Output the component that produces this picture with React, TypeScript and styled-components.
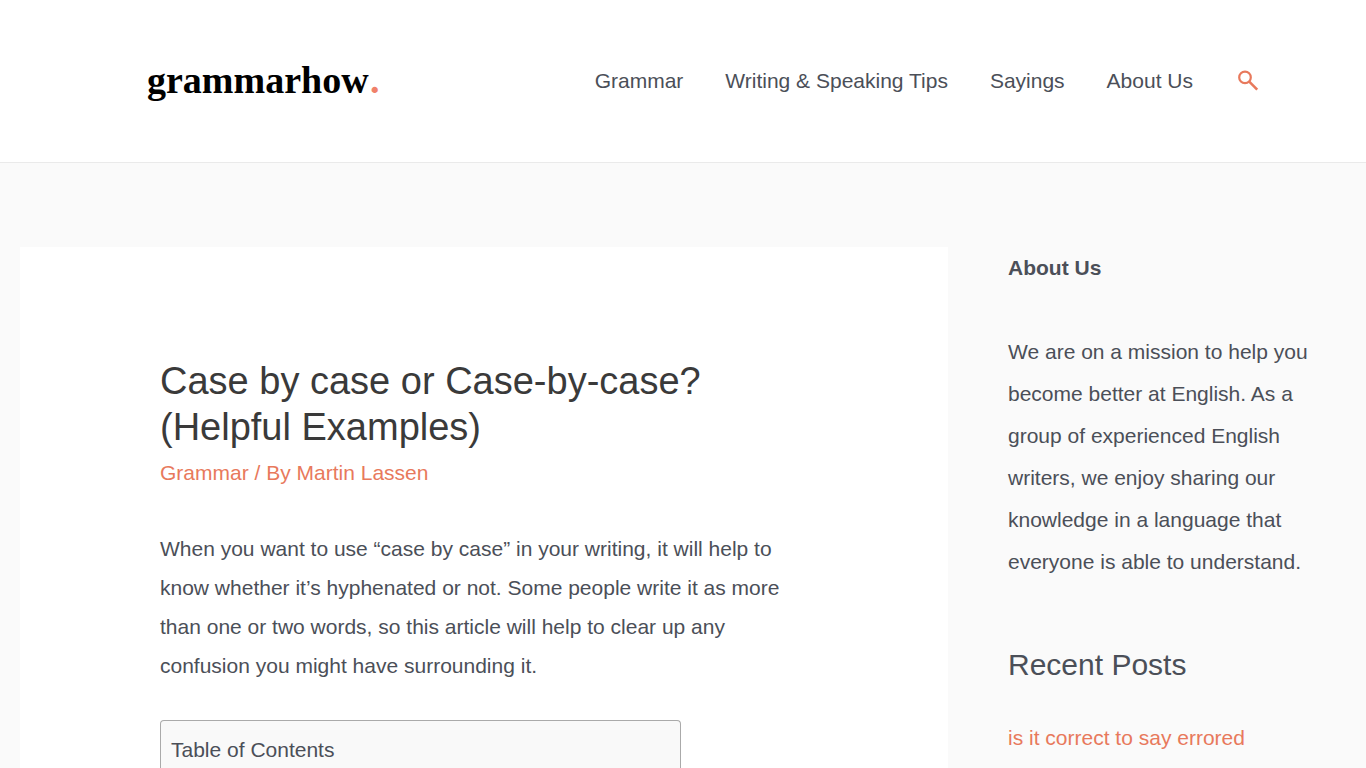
import React from 'react';
import styled, { createGlobalStyle } from 'styled-components';

const Global = createGlobalStyle`
  *, *::before, *::after { box-sizing: border-box; }
  body {
    margin: 0;
    background: #fafafa;
    color: #4b4f58;
    font: 400 21px/42px "Liberation Sans", Arial, sans-serif;
  }
  h1, h2, p, ul { margin: 0; padding: 0; font-weight: 400; }
  ul { list-style: none; }
`;

const Header = styled.header`
  background: #fff;
  border-bottom: 1px solid #eaeaea;
`;

const HeaderInner = styled.div`
  max-width: 1240px;
  margin: 0 auto;
  padding: 0 44px 0 84px;
  min-height: 162px;
  display: flex;
  align-items: center;
  justify-content: space-between;
`;

const Logo = styled.a`
  display: block;
  line-height: 0;
`;

const Nav = styled.nav`
  display: flex;
  align-items: center;
  gap: 42px;
`;

const NavLink = styled.a`
  color: #4b4f58;
  text-decoration: none;
  white-space: nowrap;
`;

const SearchButton = styled.button`
  display: flex;
  padding: 0;
  border: 0;
  background: none;
  color: #e8795c;
`;

const Columns = styled.div`
  max-width: 1326px;
  margin: 0 20px;
  padding-top: 84px;
  display: flex;
`;

const Article = styled.article`
  flex: 1 1 0;
  background: #fff;
  padding: 111px 140px 0;
`;

const Title = styled.h1`
  color: #3a3a3a;
  font-size: 38px;
  line-height: 46px;
`;

const Meta = styled.div`
  color: #e8795c;
  line-height: 46px;
`;

const AccentLink = styled.a`
  color: #e8795c;
  text-decoration: none;
`;

const Intro = styled.p`
  margin-top: 33px;
  line-height: 39px;
`;

const Contents = styled.nav`
  width: 521px;
  max-width: 100%;
  margin-top: 35px;
  padding: 8px 10px 0;
  border: 1px solid #aaa;
  border-bottom: 0;
  border-radius: 4px 4px 0 0;
  background: #f9f9f9;
`;

const Sidebar = styled.aside`
  flex: 0 0 398px;
  padding: 0 38px 0 60px;
`;

const AboutText = styled.p`
  margin-top: 42px;
`;

const WidgetTitle = styled.h2`
  font-size: 30px;
  margin: 61px 0 31px;
`;

export default function App() {
  return (
    <>
      <Global />
      <Header>
        <HeaderInner>
          <Logo href="#" aria-label="grammarhow">
            <svg width="240" height="60" viewBox="0 0 240 60">
              <text x="0" y="42" fontFamily='"Liberation Serif", serif' fontWeight="700" fontSize="38">
                grammarhow<tspan x="223" fill="#f0816a">.</tspan>
              </text>
            </svg>
          </Logo>
          <Nav>
            <NavLink href="#">Grammar</NavLink>
            <NavLink href="#">Writing &amp; Speaking Tips</NavLink>
            <NavLink href="#">Sayings</NavLink>
            <NavLink href="#">About Us</NavLink>
            <SearchButton type="button" aria-label="Search">
              <svg width="24" height="24" viewBox="0 0 24 24" fill="none" stroke="currentColor" strokeWidth="2.2">
                <circle cx="10" cy="8.4" r="5.8" />
                <path d="M14 12.4 22.2 20.6" strokeWidth="2.6" />
              </svg>
            </SearchButton>
          </Nav>
        </HeaderInner>
      </Header>
      <Columns>
        <Article>
          <Title>Case by case or Case-by-case? (Helpful Examples)</Title>
          <Meta>
            <AccentLink href="#">Grammar</AccentLink> / By <AccentLink href="#">Martin Lassen</AccentLink>
          </Meta>
          <Intro>
            When you want to use “case by case” in your writing, it will help to know whether it’s
            hyphenated or not. Some people write it as more than one or two words, so this article
            will help to clear up any confusion you might have surrounding it.
          </Intro>
          <Contents>Table of Contents</Contents>
        </Article>
        <Sidebar>
          <section>
            <p><strong>About Us</strong></p>
            <AboutText>
              We are on a mission to help you become better at English. As a group of experienced
              English writers, we enjoy sharing our knowledge in a language that everyone is able to
              understand.
            </AboutText>
          </section>
          <section>
            <WidgetTitle>Recent Posts</WidgetTitle>
            <ul>
              <li><AccentLink href="#">is it correct to say errored</AccentLink></li>
            </ul>
          </section>
        </Sidebar>
      </Columns>
    </>
  );
}
